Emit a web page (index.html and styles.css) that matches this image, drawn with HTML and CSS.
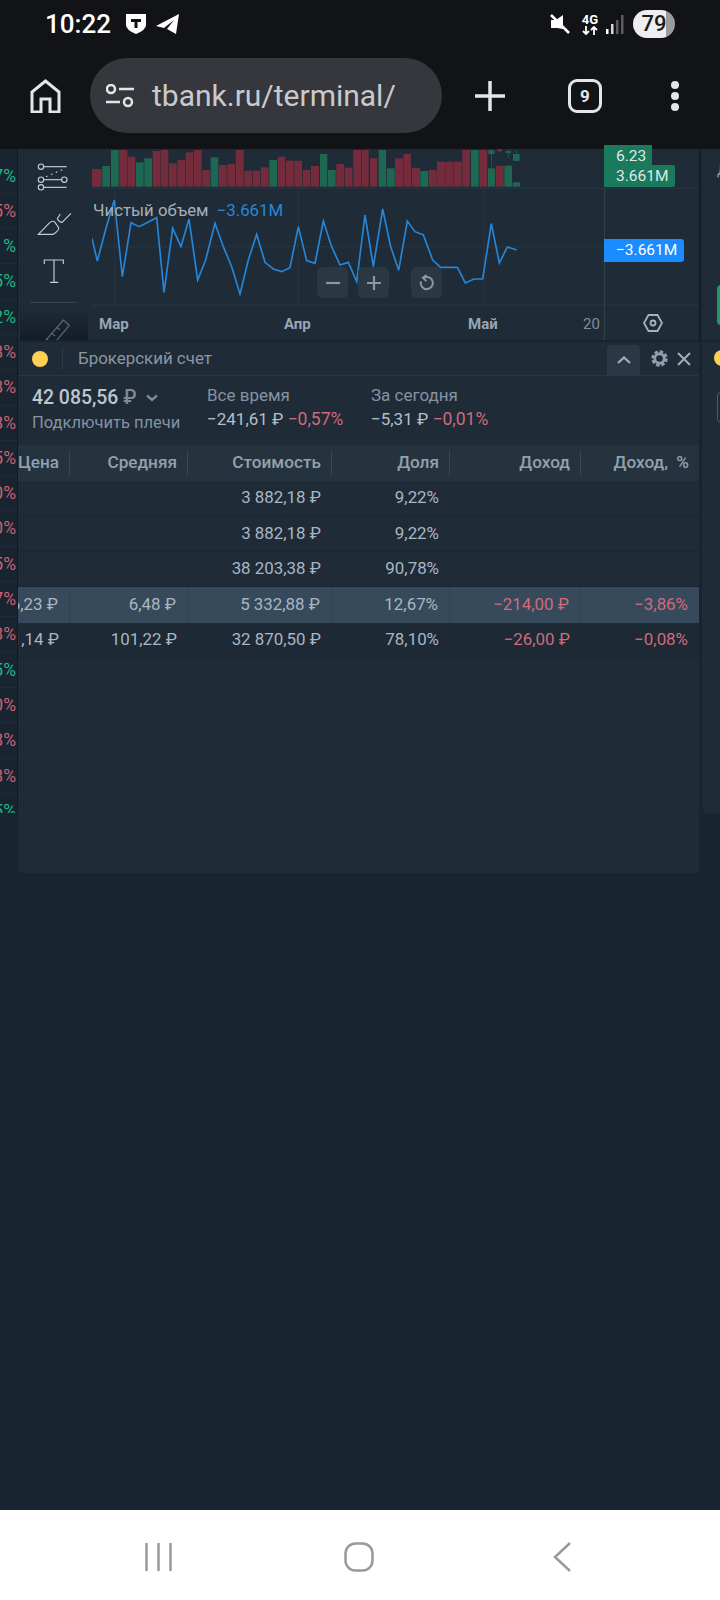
FILE: index.html
```html
<!DOCTYPE html>
<html lang="ru">
<head>
    <meta charset="utf-8">
    <title>tbank.ru/terminal</title>
    <link rel="stylesheet" href="styles.css">
</head>
<body>
<div class="topbar">
    <div class="status">
        <span class="clock">10:22</span>
        <svg class="ic-shield" viewBox="0 0 22 20"><path d="M1 0H21V11Q21 16 11 20Q1 16 1 11Z" fill="#fff"/><path d="M6 5H16V8H12.500V14H9.500V8H6Z" fill="#121317"/></svg>
        <svg class="ic-plane" viewBox="0 0 23 20"><path d="M23 0L0 12L8 14L18 6L11 15L20 20Z" fill="#fff"/></svg>
        <span class="status-gap"></span>
        <svg class="ic-mute" viewBox="0 0 20 20"><path d="M1 6H6L13 1V15L7 14H1Z" fill="#fff"/><path d="M1 1L19 19" stroke="#fff" stroke-width="2.500"/></svg>
        <div class="net">
            <span class="net-label">4G</span>
            <svg class="ic-updown" viewBox="0 0 16 9"><path d="M4 0V8M1 5L4 8L7 5M12 9V1M9 4L12 1L15 4"/></svg>
        </div>
        <svg class="ic-signal" viewBox="0 0 18 19"><rect x="0" y="14" width="2.500" height="5" fill="#fff"/><rect x="5" y="9" width="2.500" height="10" fill="#d8d8da"/><rect x="10" y="5" width="2.500" height="14" fill="#5c5d62"/><rect x="15" y="0" width="2.500" height="19" fill="#5c5d62"/></svg>
        <span class="battery">79</span>
    </div>
    <div class="urlrow">
        <svg class="ic-home" viewBox="0 0 31 34"><path d="M2 33V13L15.500 2L29 13V33H20V20H11V33Z" fill="none" stroke="#e4e5e7" stroke-width="3"/></svg>
        <div class="urlbar">
            <svg class="ic-tune" viewBox="0 0 28 24"><circle cx="5" cy="5" r="4" fill="none" stroke="#e4e5e7" stroke-width="2.500"/><path d="M13 5H28M0 18H14" stroke="#e4e5e7" stroke-width="2.500"/><circle cx="22" cy="18" r="4" fill="none" stroke="#e4e5e7" stroke-width="2.500"/></svg>
            <span class="url">tbank.ru/terminal/</span>
        </div>
        <svg class="ic-plus" viewBox="0 0 30 30"><path d="M15 0V30M0 15H30" stroke="#e4e5e7" stroke-width="3.500"/></svg>
        <span class="tabs">9</span>
        <div class="dots"><i></i><i></i><i></i></div>
    </div>
</div>

<div class="screen">
    <div class="watchlist">
        <div class="wl-row up">+1,27%</div>
        <div class="wl-row dn">−0,55%</div>
        <div class="wl-row up">+0,11%</div>
        <div class="wl-row up">+2,15%</div>
        <div class="wl-row up">+0,32%</div>
        <div class="wl-row dn">−1,38%</div>
        <div class="wl-row dn">−0,18%</div>
        <div class="wl-row dn">−2,08%</div>
        <div class="wl-row dn">−0,65%</div>
        <div class="wl-row dn">−1,10%</div>
        <div class="wl-row dn">−0,40%</div>
        <div class="wl-row dn">−0,75%</div>
        <div class="wl-row dn">−1,47%</div>
        <div class="wl-row dn">−0,28%</div>
        <div class="wl-row up">+0,45%</div>
        <div class="wl-row dn">−0,90%</div>
        <div class="wl-row dn">−1,08%</div>
        <div class="wl-row dn">−0,38%</div>
        <div class="wl-row up">+0,95%</div>
    </div>

    <div class="main">
        <div class="chart-panel">
            <svg class="toolbar" viewBox="54 12 210 573">
                <defs><linearGradient id="fade" x1="0" y1="0" x2="0" y2="1"><stop offset="0" stop-color="#1f2b37"/><stop offset="1" stop-color="#141d27"/></linearGradient></defs>
                <rect x="60" y="490" width="204" height="95" fill="url(#fade)"/>
                <g fill="none" stroke="#c3ccd4" stroke-width="3.500">
                    <circle cx="123" cy="65" r="8"/><path d="M131 65H200"/>
                    <circle cx="123" cy="104" r="8"/><path d="M131 104H185"/><circle cx="193" cy="104" r="8"/>
                    <circle cx="123" cy="127" r="8"/><path d="M131 127H200"/>
                    <path d="M138 95L192 72" stroke-dasharray="5 11"/>
                    <path d="M115 268L147 235Q158 224 165 232L176 248Q178 256 160 268Z"/><path d="M181 207L172 221Q178 232 186 232L213 205"/>
                    <path d="M133 357V345H190V357M162 345V412M150 412H175"/>
                    <path d="M125 600L190 525L208 541L150 610M140 582L150 590M155 565L165 573M170 547L180 555" stroke="#5f6b77"/>
                </g>
                <path d="M90 472H230" stroke="#3d4a57" stroke-width="3"/>
            </svg>

            <div class="chart">
                <svg class="plot" viewBox="276 12 1821 573">
                    <g class="grid">
                        <path d="M344 135V480M895 135V480M1452 135V480M276 305H1813"/>
                        <path d="M276 130H2097M276 480H2097"/>
                        <path d="M356 27H1813" stroke-dasharray="3 6"/>
                        <path class="axis-line" d="M1813 130V585"/>
                    </g>
                    <g class="dn">
                        <rect x="276" y="72" width="29" height="53"/><rect x="358" y="15" width="24" height="110"/><rect x="383" y="35" width="23" height="90"/><rect x="458" y="18" width="23" height="107"/><rect x="482" y="15" width="23" height="110"/><rect x="507" y="55" width="23" height="70"/><rect x="532" y="45" width="23" height="80"/><rect x="557" y="22" width="23" height="103"/><rect x="582" y="15" width="23" height="110"/><rect x="607" y="75" width="23" height="50"/><rect x="657" y="60" width="23" height="65"/><rect x="682" y="57" width="23" height="68"/><rect x="707" y="15" width="24" height="110"/><rect x="733" y="77" width="23" height="48"/><rect x="758" y="77" width="23" height="48"/><rect x="783" y="67" width="23" height="58"/><rect x="833" y="35" width="23" height="90"/><rect x="858" y="47" width="23" height="78"/><rect x="883" y="47" width="23" height="78"/><rect x="908" y="75" width="23" height="50"/><rect x="933" y="63" width="24" height="62"/><rect x="1009" y="57" width="23" height="68"/><rect x="1034" y="68" width="23" height="57"/><rect x="1060" y="15" width="23" height="110"/><rect x="1085" y="15" width="21" height="110"/><rect x="1110" y="40" width="22" height="85"/><rect x="1185" y="40" width="25" height="85"/><rect x="1211" y="27" width="22" height="98"/><rect x="1235" y="68" width="25" height="57"/><rect x="1287" y="75" width="23" height="50"/><rect x="1311" y="50" width="24" height="75"/><rect x="1336" y="50" width="24" height="75"/><rect x="1361" y="50" width="24" height="75"/><rect x="1387" y="15" width="23" height="110"/><rect x="1438" y="15" width="24" height="110"/><rect x="1487" y="62" width="24" height="63"/><rect x="1493" y="12" width="12" height="8"/>
                    </g>
                    <g class="up">
                        <rect x="307" y="63" width="23" height="62"/><rect x="333" y="15" width="23" height="110"/><rect x="408" y="52" width="23" height="73"/><rect x="433" y="40" width="23" height="85"/><rect x="632" y="37" width="23" height="88"/><rect x="808" y="45" width="23" height="80"/><rect x="960" y="27" width="22" height="98"/><rect x="984" y="75" width="23" height="50"/><rect x="1136" y="15" width="22" height="110"/><rect x="1160" y="70" width="24" height="55"/><rect x="1261" y="78" width="24" height="47"/><rect x="1413" y="15" width="23" height="110"/><rect x="1464" y="70" width="21" height="55"/><rect x="1513" y="62" width="23" height="63"/><rect x="1538" y="112" width="22" height="13"/>
                        <rect x="1465" y="15" width="18" height="12"/><rect x="1473" y="15" width="2" height="53"/><rect x="1517" y="18" width="16" height="6"/><rect x="1524" y="12" width="2" height="28"/><rect x="1539" y="27" width="20" height="21"/><rect x="1548" y="15" width="2" height="33"/>
                    </g>
                    <polyline class="net-line" points="276,280 292,348 318,250 343,165 367,395 393,233 418,245 470,218 492,442 518,250 543,305 567,222 593,405 617,345 645,235 670,305 695,365 720,447 745,345 770,268 795,352 820,372 845,380 870,368 895,245 920,347 945,355 970,228 995,305 1020,360 1045,352 1070,410 1095,210 1120,365 1148,192 1172,305 1196,376 1222,228 1245,260 1270,270 1298,345 1322,367 1372,367 1396,414 1422,402 1448,402 1474,236 1498,354 1522,306 1550,315"/>
                </svg>

                <div class="legend">Чистый объем <span class="legend-val">−3.661M</span></div>

                <span class="tag tag-price">6.23</span>
                <span class="tag tag-vol">3.661M</span>
                <span class="tag tag-net">−3.661M</span>

                <div class="zoom-btns">
                    <span class="zbtn"><svg viewBox="0 0 14 14"><path d="M0 7H14" stroke-width="2.200"/></svg></span>
                    <span class="zbtn"><svg viewBox="0 0 14 14"><path d="M0 7H14M7 0V14" stroke-width="2.200"/></svg></span>
                    <span class="zbtn zbtn-reset"><svg viewBox="0 0 16 16"><path d="M5 3A6.500 6.500 0 1 1 2 7" stroke-width="2.200"/><path d="M8 0L4 3L8 6.500" stroke-width="2"/></svg></span>
                </div>

                <span class="month m-mar">Мар</span>
                <span class="month m-apr">Апр</span>
                <span class="month m-may">Май</span>
                <span class="day">20</span>
                <svg class="ic-hex" viewBox="0 0 20 18"><path d="M5.500 1H14.500L19 9L14.500 17H5.500L1 9Z"/><circle cx="10" cy="9" r="2.500"/></svg>
            </div>
        </div>

        <div class="portfolio">
            <div class="pf-head">
                <span class="dot"></span>
                <span class="pf-title">Брокерский счет</span>
                <span class="collapse"><svg viewBox="0 0 14 8"><path d="M1 7L7 1.500L13 7"/></svg></span>
                <svg class="ic-gear" viewBox="0 0 18 18"><circle cx="9" cy="9" r="7" fill="none" stroke="#8f9eac" stroke-width="3.400" stroke-dasharray="3.500 2"/><circle cx="9" cy="9" r="5" fill="none" stroke="#8f9eac" stroke-width="3"/></svg>
                <svg class="ic-close" viewBox="0 0 14 14"><path d="M1 1L13 13M13 1L1 13"/></svg>
            </div>

            <div class="pf-summary">
                <div class="sum-balance">
                    <div class="balance">42 085,56 <span class="rub">₽</span>
                        <svg class="ic-chev" viewBox="0 0 12 8"><path d="M1 1.500L6 6L11 1.500"/></svg>
                    </div>
                    <div class="leverage">Подключить плечи</div>
                </div>
                <div class="sum-col sum-all">
                    <div class="sum-label">Все время</div>
                    <div class="sum-val">−241,61 ₽ <span class="loss">−0,57%</span></div>
                </div>
                <div class="sum-col">
                    <div class="sum-label">За сегодня</div>
                    <div class="sum-val">−5,31 ₽ <span class="loss">−0,01%</span></div>
                </div>
            </div>

            <div class="table">
                <div class="tr thead">
                    <div class="td">Цена</div><div class="td">Средняя</div><div class="td">Стоимость</div><div class="td">Доля</div><div class="td">Доход</div><div class="td th-last">Доход, %</div>
                </div>
                <div class="tr">
                    <div class="td"></div><div class="td"></div><div class="td">3 882,18 ₽</div><div class="td">9,22%</div><div class="td"></div><div class="td"></div>
                </div>
                <div class="tr">
                    <div class="td"></div><div class="td"></div><div class="td">3 882,18 ₽</div><div class="td">9,22%</div><div class="td"></div><div class="td"></div>
                </div>
                <div class="tr">
                    <div class="td"></div><div class="td"></div><div class="td">38 203,38 ₽</div><div class="td">90,78%</div><div class="td"></div><div class="td"></div>
                </div>
                <div class="tr tr-active">
                    <div class="td">6,23 ₽</div><div class="td">6,48 ₽</div><div class="td">5 332,88 ₽</div><div class="td">12,67%</div><div class="td loss">−214,00 ₽</div><div class="td loss">−3,86%</div>
                </div>
                <div class="tr tr-dark">
                    <div class="td">101,14 ₽</div><div class="td">101,22 ₽</div><div class="td">32 870,50 ₽</div><div class="td">78,10%</div><div class="td loss">−26,00 ₽</div><div class="td loss">−0,08%</div>
                </div>
            </div>
        </div>
    </div>

    <div class="side">
        <div class="side-top">
            <span class="side-letter">Д</span>
            <span class="side-green"></span>
        </div>
        <div class="side-panel">
            <span class="side-dot"></span>
            <span class="side-btn"></span>
        </div>
    </div>
</div>

<div class="navbar">
    <svg class="nav-recent" viewBox="0 0 27 30"><path d="M1.500 1V29M13.500 1V29M25.500 1V29"/></svg>
    <svg class="nav-home" viewBox="0 0 30 30"><rect x="1.500" y="1.500" width="27" height="27" rx="10"/></svg>
    <svg class="nav-back" viewBox="0 0 18 30"><path d="M17 1L2 15L17 29"/></svg>
</div>
</body>
</html>
```

FILE: styles.css
```css
*{margin: 0; padding: 0; box-sizing: border-box;}
html,body{height: 100%;}
body{width: 720px; height: 1600px; display: flex; flex-direction: column; overflow: hidden;
    background: #18242f; font-family: Roboto, "Liberation Sans", sans-serif; color: #a9b6c2;}

/* browser top */
.topbar{height: 149px; flex: none; background: #121317; color: #fff;}
.status{height: 48px; display: flex; align-items: center; padding: 0 45px 0 46px;}
.clock{font-size: 26px; font-weight: 500; width: 80px; margin-left: -1px;}
.ic-shield{width: 22px; height: 20px; margin-right: 9px;}
.ic-plane{width: 23px; height: 20px;}
.status-gap{flex: 1;}
.ic-mute{width: 20px; height: 20px; margin-right: 11px;}
.net{width: 18px; display: flex; flex-direction: column; align-items: center; margin-right: 7px;}
.net-label{font-size: 13px; line-height: 12px; font-weight: 700;}
.ic-updown{width: 16px; height: 9px; fill: none; stroke: #fff; stroke-width: 1.800;}
.ic-signal{width: 18px; height: 19px; margin-right: 9px;}
.battery{width: 42px; height: 28px; border-radius: 14px; font-size: 22px; font-weight: 500; color: #1a1a1c;
    text-align: center; line-height: 28px; background: linear-gradient(90deg, #eee 79%, #9b9b9b 79%);}

.urlrow{display: flex; align-items: center; height: 75px; margin-top: 10px; padding-left: 30px;}
.ic-home{width: 31px; height: 34px; margin-right: 29px;}
.urlbar{width: 352px; height: 75px; border-radius: 38px; background: #36373d; display: flex; align-items: center;
    padding-left: 16px; margin-right: 33px;}
.ic-tune{width: 28px; height: 24px; margin-right: 18px;}
.url{font-size: 30px; color: #c9cacd; white-space: nowrap;}
.ic-plus{width: 30px; height: 30px; margin-right: 63px;}
.tabs{width: 34px; height: 34px; border: 3px solid #e4e5e7; border-radius: 9px; font-size: 17px; font-weight: 700;
    color: #e4e5e7; text-align: center; line-height: 28px; margin-right: 69px;}
.dots{display: flex; flex-direction: column; gap: 3px;}
.dots i{display: block; width: 8px; height: 8px; border-radius: 50%; background: #e4e5e7;}

/* terminal */
.screen{flex: 1; display: flex; align-items: flex-start; background: #18242f;}
.watchlist{width: 18px; height: 664px; flex: none; padding-top: 9.500px; overflow: hidden; border-right: 1px solid #111a22;}
.wl-row{height: 35.300px; line-height: 35px; display: flex; justify-content: flex-end; padding-right: 1px;
    font-size: 17.500px; white-space: nowrap; border-bottom: 1px solid #1f2b37;}
.wl-row.up{color: #1db887;}
.wl-row.dn{color: #cc6073;}

.main{width: 682px; flex: none; display: flex; flex-direction: column; gap: 2px;}
.chart-panel{height: 191px; display: flex; background: #1f2b37; border-right: 1px solid #111a22;}
.toolbar{width: 70px; height: 191px; flex: none; display: block;}
.chart{position: relative; margin-left: 4px; width: 607px; height: 191px;}
.plot{display: block; width: 607px; height: 191px;}
.grid path{fill: none; stroke: #2b3845; stroke-width: 2.500;}
.grid .axis-line{stroke: #3b4956;}
.plot .dn rect{fill: #742c3c;}
.plot .up rect{fill: #1e6752;}
.net-line{fill: none; stroke: #2586d8; stroke-width: 5;}

.legend{position: absolute; left: 1px; top: 52px; font-size: 16.800px; line-height: 18px; color: #a4b0bb; white-space: nowrap;}
.legend-val{color: #2a86d8; margin-left: 4px;}

.tag{position: absolute; left: 512px; color: #dfe9e6; font-size: 15.500px; line-height: 22px; padding-left: 12px; white-space: nowrap;}
.tag-price{top: -4px; width: 48px; background: #1c7a5c;}
.tag-vol{top: 16px; width: 71px; height: 22px; background: #1c7a5c; border-radius: 0 2px 2px 0;}
.tag-net{top: 90px; width: 80px; height: 23px; background: #1a8cff; color: #fff; line-height: 23px; border-radius: 0 3px 3px 0;}

.zoom-btns{position: absolute; left: 225px; top: 118px; display: flex;}
.zbtn{width: 31px; height: 31px; border-radius: 5px; background: #2a3844; margin-right: 10px;
    display: flex; align-items: center; justify-content: center;}
.zbtn-reset{margin-left: 12px;}
.zbtn svg{width: 14px; height: 14px; fill: none; stroke: #8b98a4; overflow: visible;}
.zbtn-reset svg{width: 15px; height: 15px;}

.month{position: absolute; top: 166px; font-size: 15px; font-weight: 700; line-height: 18px; color: #98a6b3;}
.m-mar{left: 7px;}
.m-apr{left: 192px;}
.m-may{left: 376px;}
.day{position: absolute; left: 491px; top: 166px; font-size: 15px; line-height: 18px; color: #7f8d9a;}
.ic-hex{position: absolute; left: 551px; top: 165px; width: 20px; height: 18px; fill: none; stroke: #a7b2bd; stroke-width: 1.800;}

/* portfolio */
.portfolio{height: 531px; width: 681px; background: #1f2b37; border-radius: 0 0 4px 4px;}
.pf-head{height: 34px; display: flex; align-items: center; border-bottom: 1px solid #2a3744; position: relative;}
.dot{width: 16px; height: 16px; border-radius: 50%; background: #fdd054; margin: 0 14px 0 14px;}
.pf-title{flex: 1; font-size: 16.900px; color: #8a98a5; border-left: 1px solid #2e3b48; padding-left: 15px; line-height: 22px; height: 22px; margin-top: -1px;}
.collapse{width: 33px; height: 30px; margin-top: 3px; background: #2a3744; border-radius: 4px 4px 0 0; margin-right: 11px;
    display: flex; align-items: center; justify-content: center;}
.collapse svg{width: 14px; height: 8px; fill: none; stroke: #a4b0bb; stroke-width: 2.200;}
.ic-gear{width: 17px; height: 17px; margin-right: 9px;}
.ic-close{width: 14px; height: 14px; margin-right: 8px; fill: none; stroke: #a0adba; stroke-width: 2;}

.pf-summary{height: 69px; display: flex; padding: 7px 0 0 14px;}
.sum-balance{width: 175px; padding-top: 2px;}
.balance{font-size: 19.400px; font-weight: 500; line-height: 26px; color: #bcc7d0; white-space: nowrap;}
.rub{color: #7d8b98;}
.ic-chev{width: 12px; height: 8px; fill: none; stroke: #7d8b98; stroke-width: 2.400; margin-left: 5px; vertical-align: 2px;}
.leverage{font-size: 16.500px; line-height: 23px; color: #8493a1;}
.sum-col{width: 164px; font-size: 17px; line-height: 24px;}
.sum-label{color: #8493a1;}
.sum-val{color: #b4bfc9; white-space: nowrap; font-size: 17px;}
.sum-val .loss{font-size: 17.500px;}
.loss{color: #d06a7c;}

.tr{display: grid; grid-template-columns: 52px 118px 144px 118px 131px 118px; height: 35.400px; align-items: stretch;
    border-bottom: 1px solid #1b2632;}
.td{display: flex; align-items: center; justify-content: flex-end; padding: 0 11px 2px 0; overflow: hidden;
    white-space: nowrap; font-size: 16.900px;}
.td.loss{color: #d06a7c;}
.thead{background: #25333f; border-bottom: 0; height: 36px;}
.thead .td{height: 26px; align-self: center; padding-right: 10px; color: #93a1ae; font-size: 17.200px; font-weight: 500; border-right: 1px solid #374655;}
.thead .td:last-child{border-right: 0;}
.thead .th-last{word-spacing: 4px;}
.tr-active{background: #364a5b; border-bottom: 0;}
.tr-active .td{border-right: 1px solid #314353;}
.tr-active .td:last-child{border-right: 0;}
.tr-dark{background: #1d2935;}

/* next panels, cut by the window */
.side{flex: 1; display: flex; flex-direction: column; gap: 2px; padding-left: 2px;}
.side-top{height: 191px; position: relative; background: #1f2b37; overflow: hidden;}
.side-letter{position: absolute; left: 15px; top: 12px; font-size: 15px; color: #8796a4;}
.side-green{position: absolute; left: 15px; top: 136px; width: 8px; height: 40px; border-radius: 4px 0 0 4px; background: #1c9a6e;}
.side-panel{height: 471px; position: relative; background: #1f2b37; border-radius: 0 0 0 6px; overflow: hidden;}
.side-dot{position: absolute; left: 12px; top: 8px; width: 16px; height: 16px; border-radius: 50%; background: #fdd054;}
.side-btn{position: absolute; left: 15px; top: 50px; width: 12px; height: 31px; border: 1px solid #34608f; border-radius: 4px;}

/* android nav */
.navbar{height: 90px; flex: none; background: #fff; position: relative;}
.navbar svg{position: absolute; top: 32px; height: 30px; fill: none; stroke: #9a9a9a; stroke-width: 2.500;}
.nav-recent{left: 145px; width: 27px;}
.nav-home{left: 344px; width: 30px;}
.nav-back{left: 553px; width: 18px;}
```
